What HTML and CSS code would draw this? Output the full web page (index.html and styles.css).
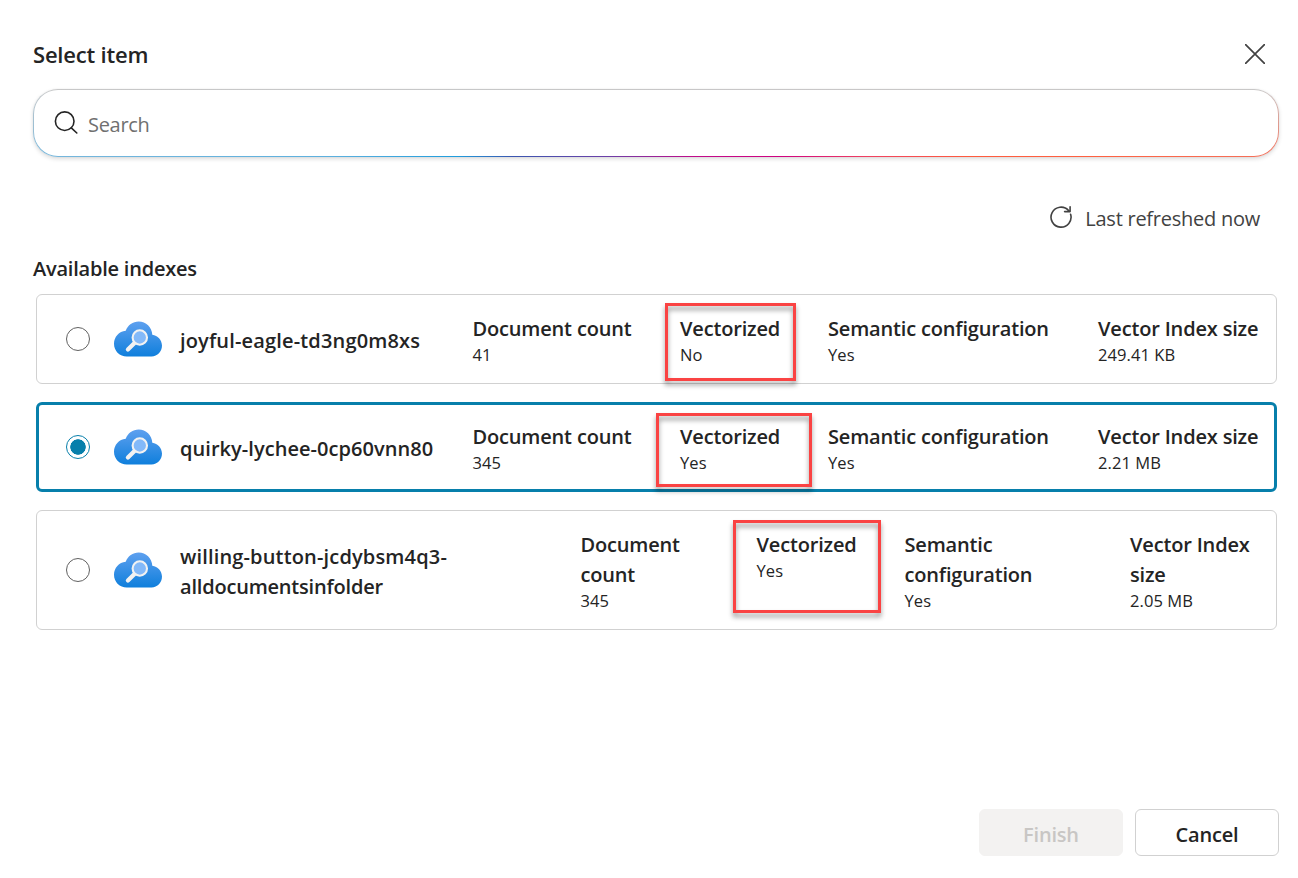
FILE: index.html
```html
<!DOCTYPE html>
<html lang="en">
<head>
<meta charset="utf-8">
<title>Select item</title>
<link rel="stylesheet" href="styles.css">
</head>
<body>
<svg class="defs" width="0" height="0" aria-hidden="true">
  <defs>
    <linearGradient id="cloud-fill" x1="0" y1="0" x2="0" y2="1">
      <stop offset="0" stop-color="#5ea0ef"/>
      <stop offset="1" stop-color="#0f7fdc"/>
    </linearGradient>
    <symbol id="cloud" viewBox="0 0 48 36">
      <path fill="url(#cloud-fill)" d="M48 24.6C47.8 19 43.700 14.500 38.300 13.800C37.900 6 32 .5 24.700 .5C18.800 .5 13.800 4.200 11.700 9.700C5 10.300 0 15.900 0 22.700C0 30 5.800 35.500 12.800 35.500H37.500C43.500 35.400 48 30.500 48 24.600Z"/>
      <path stroke="#f2f2f2" stroke-width="4.200" stroke-linecap="round" d="M21 21.500L13.900 28.600"/>
      <circle cx="25.800" cy="16.500" r="7.200" fill="#83b9f9" stroke="#f2f2f2" stroke-width="2.100"/>
    </symbol>
  </defs>
</svg>
<main class="dialog">
  <header class="dialog-header">
    <h1 class="title"><span>Select item</span></h1>
    <svg class="close" viewBox="0 0 20 20"><path d="M.6 .6L19.400 19.400M19.400 .6L.6 19.400"/></svg>
  </header>
  <div class="search">
    <svg class="search-icon" viewBox="0 0 24 24"><circle cx="10.700" cy="10.200" r="9.300"/><path d="M17.300 16.800L22.800 22"/></svg>
    <span class="placeholder">Search</span>
  </div>
  <div class="refresh">
    <svg class="refresh-icon" viewBox="0 0 22 22"><path d="M20.600 8.200A10 10 0 1 1 18.600 4.600L19.600 5.500M20.100 .8V5.600H14.600"/></svg>
    <span class="refresh-text">Last refreshed now</span>
  </div>
  <h2 class="section"><span>Available indexes</span></h2>
  <div class="list">
    <div class="row">
      <span class="radio"></span>
      <svg class="cloud"><use href="#cloud"/></svg>
      <div class="name">joyful-eagle-td3ng0m8xs</div>
      <div class="metric"><div class="label">Document count</div><div class="value">41</div></div>
      <div class="metric"><div class="label">Vectorized</div><div class="value">No</div><span class="callout callout-first"></span></div>
      <div class="metric"><div class="label">Semantic configuration</div><div class="value">Yes</div></div>
      <div class="metric"><div class="label">Vector Index size</div><div class="value">249.41 KB</div></div>
    </div>
    <div class="row selected">
      <span class="radio"></span>
      <svg class="cloud"><use href="#cloud"/></svg>
      <div class="name">quirky-lychee-0cp60vnn80</div>
      <div class="metric"><div class="label">Document count</div><div class="value">345</div></div>
      <div class="metric"><div class="label">Vectorized</div><div class="value">Yes</div><span class="callout callout-second"></span></div>
      <div class="metric"><div class="label">Semantic configuration</div><div class="value">Yes</div></div>
      <div class="metric"><div class="label">Vector Index size</div><div class="value">2.21 MB</div></div>
    </div>
    <div class="row wrapped">
      <span class="radio"></span>
      <svg class="cloud"><use href="#cloud"/></svg>
      <div class="name">willing-button-jcdybsm4q3-<br><span class="name-tail">alldocumentsinfolder</span></div>
      <div class="metric"><div class="label">Document<br>count</div><div class="value">345</div></div>
      <div class="metric"><div class="label">Vectorized</div><div class="value">Yes</div><span class="callout callout-third"></span></div>
      <div class="metric"><div class="label">Semantic<br>configuration</div><div class="value">Yes</div></div>
      <div class="metric"><div class="label">Vector Index<br>size</div><div class="value">2.05 MB</div></div>
    </div>
  </div>
  <footer class="actions">
    <button class="button" disabled>Finish</button>
    <button class="button">Cancel</button>
  </footer>
</main>
</body>
</html>
```

FILE: styles.css
```css
* { box-sizing: border-box; }
body {
  margin: 0;
  background: #fff;
  color: #242424;
  font-family: "Open Sans", "Noto Sans", sans-serif;
}
.defs { position: absolute; }
.dialog {
  display: flex;
  flex-direction: column;
  height: 878px;
  padding: 37px 19px 22px 33px;
}
.dialog-header {
  display: flex;
  justify-content: space-between;
  align-items: center;
  height: 33px;
  padding-right: 14px;
}
.title { margin: 0; font-size: 22px; line-height: 32px; font-weight: 600; letter-spacing: -0.2px; }
.close { width: 20px; height: 20px; fill: none; stroke: #424242; stroke-width: 1.7; stroke-linecap: round; }
.search {
  display: flex;
  align-items: center;
  height: 68px;
  margin-top: 19px;
  padding: 0 20px;
  border: 1px solid transparent;
  border-radius: 25px;
  background:
    linear-gradient(#fff, #fff) padding-box,
    linear-gradient(to bottom, #c8c8c8, rgba(209, 209, 209, 0)) border-box,
    linear-gradient(to right, #77b7dc 0%, #5bb0de 24%, #1f9ddd 34%, #3a55b0 38.5%, #6a3fa8 46%, #c00a8a 53%, #cf0080 60%, #f0405f 67%, #ff5a3d 75%, #ff6040 85%, #f4705a 100%) border-box;
  box-shadow: 0 2px 4px rgba(0, 0, 0, .14), 0 0 2px rgba(0, 0, 0, .06);
}
.search-icon { width: 24px; height: 24px; fill: none; stroke: #242424; stroke-width: 1.6; stroke-linecap: round; }
.placeholder { margin: 4px 0 0 10px; color: #707070; font-size: 20px; line-height: 30px; letter-spacing: -0.3px; }
.refresh {
  display: flex;
  justify-content: flex-end;
  align-items: center;
  height: 30px;
  margin-top: 45px;
  padding-right: 19px;
  color: #424242;
}
.refresh-icon { width: 22px; height: 22px; fill: none; stroke: #424242; stroke-width: 1.6; stroke-linecap: round; stroke-linejoin: round; }
.refresh-text { margin: 2px 0 0 13px; font-size: 20px; letter-spacing: -0.25px; }
.section { margin: 22px 0 0; font-size: 20px; line-height: 30px; font-weight: 600; letter-spacing: -0.22px; }
.list { display: flex; flex-direction: column; gap: 18px; margin: 10px 2px 0 3px; }
.row {
  display: grid;
  grid-template-columns: 48px 66px 292.500px 207.500px 148px 270px auto;
  align-items: center;
  height: 90px;
  padding-left: 29px;
  border: 1px solid #d1d1d1;
  border-radius: 6px;
}
.row.wrapped { grid-template-columns: 48px 66px 400.500px 176px 148px 225.500px auto; height: 120px; }
.row.selected { border: 3px solid #077fab; padding-left: 27px; }
.radio { width: 24px; height: 24px; border: 1.5px solid #616161; border-radius: 50%; }
.selected .radio { border-color: #077fab; background: radial-gradient(circle, #077fab 7.400px, #fff 8px); }
.cloud { width: 48px; height: 36px; }
.name { margin-top: 4px; font-size: 20px; line-height: 30px; font-weight: 600; letter-spacing: 0.16px; }
.selected .name { letter-spacing: 0.05px; }
.name-tail { letter-spacing: -0.2px; }
.metric { position: relative; align-self: start; margin-top: 19px; white-space: nowrap; }
.selected .metric { margin-top: 17px; }
.label { font-size: 20px; line-height: 30px; font-weight: 600; letter-spacing: -0.17px; }
.value { font-size: 16.500px; line-height: 22px; letter-spacing: 0.08px; }
.callout {
  position: absolute;
  border: 3px solid #fa4343;
  filter: drop-shadow(0 4px 2.500px rgba(0, 0, 0, .42));
}
.callout-first { top: -11px; left: -15px; width: 131px; height: 78px; }
.callout-second { top: -9px; left: -24px; width: 156px; height: 74px; }
.callout-third { top: -10px; left: -23.500px; width: 148px; height: 93px; }
.actions { display: flex; justify-content: flex-end; gap: 12px; margin-top: auto; }
.button {
  width: 144px;
  height: 47px;
  padding: 4px 0 0;
  border: 1px solid #d1d1d1;
  border-radius: 6px;
  background: #fff;
  color: #242424;
  font: 600 20px "Open Sans", sans-serif;
  letter-spacing: -0.2px;
}
.button:disabled { border-color: #f3f2f1; background: #f3f2f1; color: #c8c6c4; }
```
